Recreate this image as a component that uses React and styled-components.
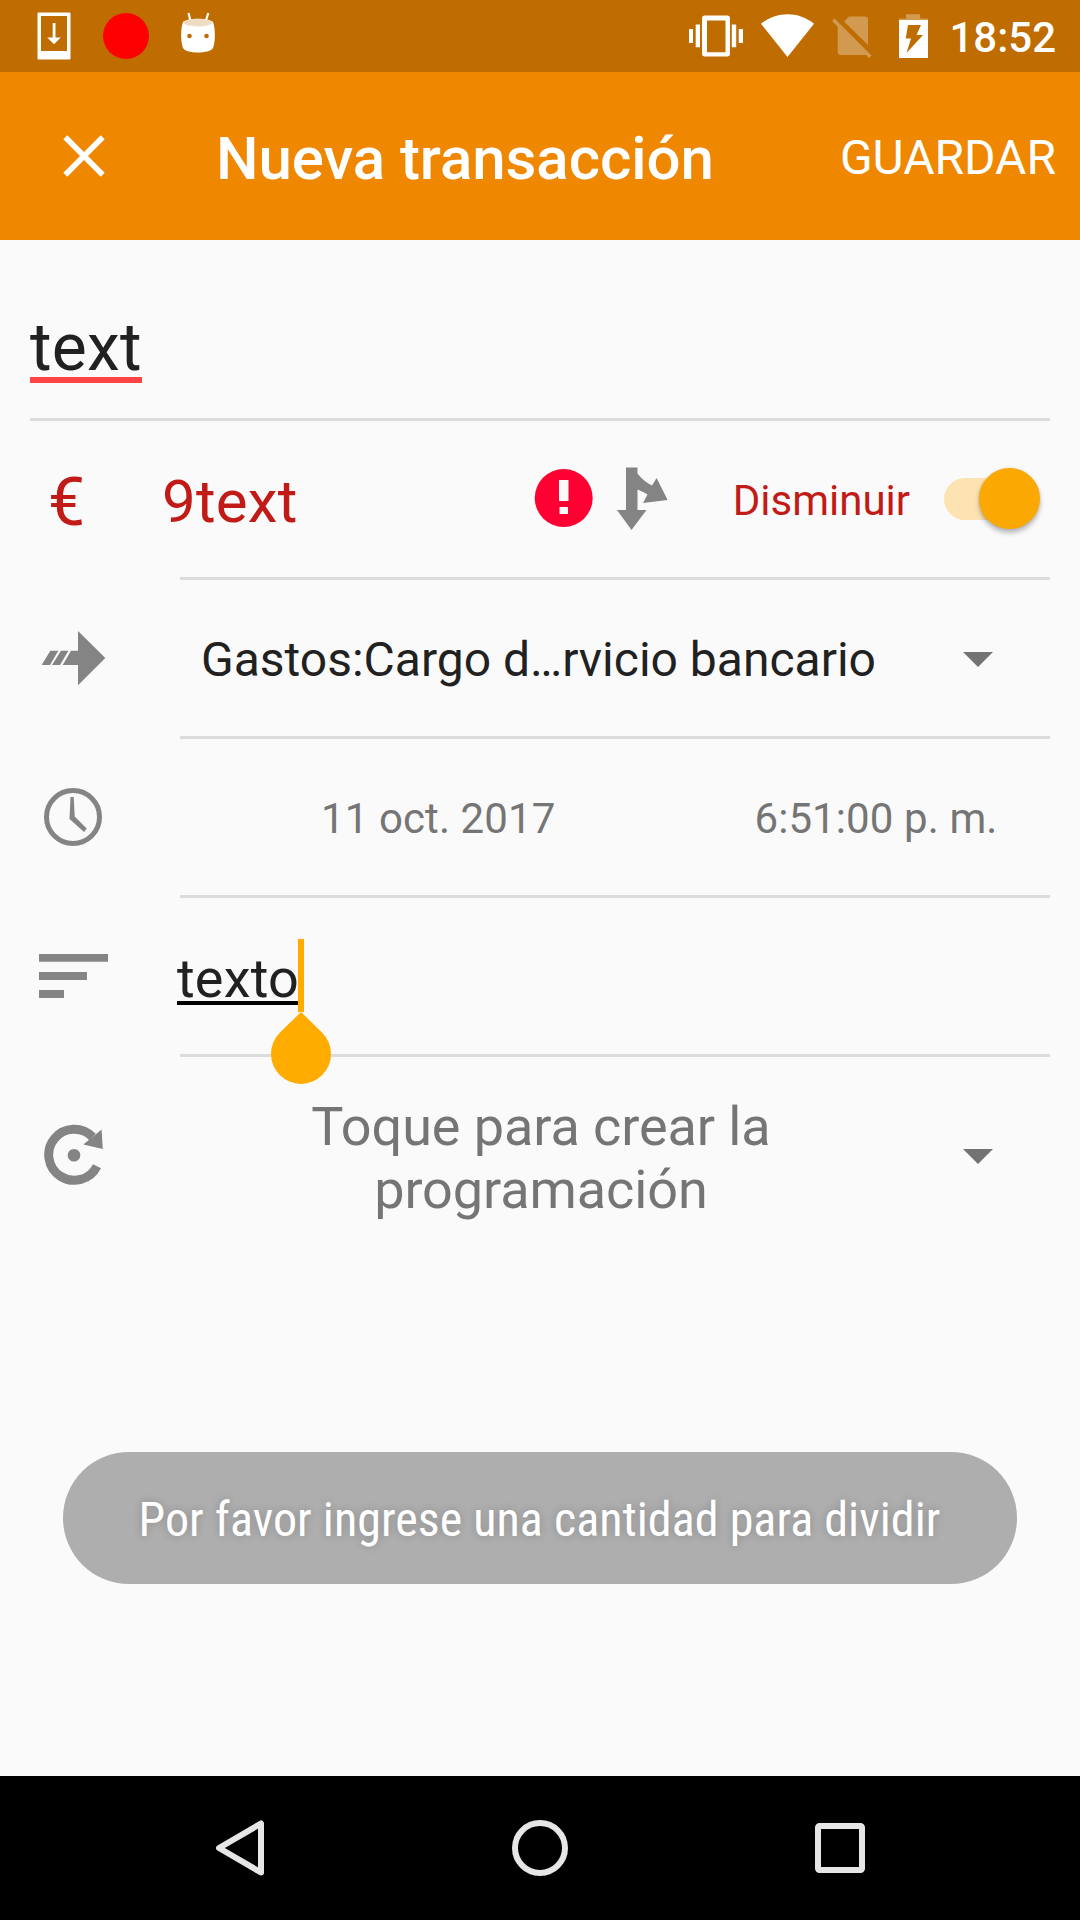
import React from "react";
import styled, { createGlobalStyle } from "styled-components";

const Global = createGlobalStyle`
  * { box-sizing: border-box; }
  body { margin: 0; background: #fafafa; }
  svg { display: block; flex: none; }
`;

const Screen = styled.div`
  width: 1080px;
  height: 1920px;
  display: flex;
  flex-direction: column;
  background: #fafafa;
  font-family: Roboto, "Noto Sans", sans-serif;
  color: #212121;
  overflow: hidden;
`;

const StatusBar = styled.header`
  height: 72px;
  background: #bf6c00;
  display: flex;
  align-items: center;
  justify-content: space-between;
  padding: 0 24px 0 36px;
`;

const StatusGroup = styled.div`
  display: flex;
  align-items: center;
  gap: ${(p) => p.$gap}px;
`;

const Clock = styled.time`
  margin-left: 2px;
  padding-top: 3px;
  font-size: 42px;
  line-height: 50px;
  font-weight: 500;
  color: #fff;
`;

const AppBar = styled.div`
  height: 168px;
  background: #ef8700;
  color: #fff;
  display: flex;
  align-items: center;
  padding: 0 24px 0 60px;
`;

const Title = styled.h1`
  flex: 1;
  margin: 0 0 0 108px;
  padding-top: 5px;
  font-size: 60px;
  line-height: 70px;
  font-weight: 500;
  letter-spacing: -0.06px;
  white-space: nowrap;
`;

const IconButton = styled.button`
  border: 0;
  padding: 0;
  margin-left: ${(p) => p.$left || 0}px;
  background: none;
  display: flex;
`;

const SaveButton = styled.button`
  border: 0;
  padding: 3px 0 0;
  background: none;
  color: #fff;
  font: 400 48px/56px Roboto, "Noto Sans", sans-serif;
`;

const Form = styled.main`
  flex: 1;
  padding: 0 30px;
  display: flex;
  flex-direction: column;
`;

const NameField = styled.div`
  height: 181px;
  border-bottom: 3px solid #dcdcdc;
  padding-top: 70px;
  display: flex;
  align-items: flex-start;
`;

const Misspelled = styled.span`
  width: 112px;
  height: 73px;
  border-bottom: 6px solid #ff4444;
  font-size: 66px;
  line-height: 76px;
  letter-spacing: 0.25px;
`;

const Row = styled.section`
  display: grid;
  grid-template-columns: 150px 1fr;
  height: ${(p) => p.$height || 159}px;
`;

const Lead = styled.div`
  display: flex;
  align-items: center;
  padding: 0 0 3px ${(p) => p.$inset || 0}px;
`;

const Cell = styled.div`
  display: flex;
  align-items: center;
  border-bottom: 3px solid ${(p) => (p.$plain ? "transparent" : "#dcdcdc")};
`;

const Label = styled.span`
  font-size: ${(p) => p.$size}px;
  line-height: 1.17;
  color: ${(p) => p.$color || "#212121"};
  padding-top: ${(p) => p.$drop || 3}px;
  margin-left: ${(p) => p.$left || 0}px;
  letter-spacing: ${(p) => p.$tracking || 0}px;
  white-space: nowrap;
`;

const Amount = styled(Label)`
  flex: 1;
`;

const Alert = styled.svg`
  margin-bottom: 2px;
`;

const Track = styled.span`
  flex: none;
  width: 86px;
  height: 42px;
  margin: 0 20px 1px 34px;
  border-radius: 21px;
  background: #fde3b1;
  display: flex;
  align-items: center;
  justify-content: flex-start;
  padding-left: 35px;
`;

const Thumb = styled.span`
  flex: none;
  width: 61px;
  height: 61px;
  border-radius: 50%;
  background: #fba902;
  box-shadow: 0 4px 5px rgba(0, 0, 0, 0.26), 0 0 3px rgba(0, 0, 0, 0.12);
`;

const Caret = styled.span`
  flex: none;
  width: 30px;
  height: 15px;
  margin: 3px 57px 0 auto;
  background: #737373;
  clip-path: polygon(0 0, 100% 0, 50% 100%);
`;

const Composing = styled.span`
  position: relative;
  width: 122px;
  height: 59px;
  margin: 0 0 1px -3px;
  border-bottom: 4px solid #000;
  font-size: 54px;
  line-height: 65px;
  letter-spacing: 0.2px;
`;

const Cursor = styled.i`
  position: absolute;
  left: 121px;
  top: -7px;
  width: 6px;
  height: 73px;
  background: #ffab00;
`;

const Handle = styled.svg`
  position: absolute;
  left: 94px;
  top: 66px;
`;

const Schedule = styled.p`
  margin: 0 0 0 103px;
  padding-top: 6px;
  width: 516px;
  text-align: center;
  font-size: 54px;
  line-height: 63px;
  letter-spacing: -0.08px;
  color: #757575;
`;

const Toast = styled.div`
  align-self: center;
  width: 954px;
  height: 132px;
  margin: 196px 1px 0 0;
  border-radius: 66px;
  background: #aeaeae;
  display: flex;
  align-items: center;
  justify-content: center;
  padding-top: 4px;
  color: #fff;
  font-family: "Roboto Condensed", Roboto, sans-serif;
  font-stretch: 75%;
  font-size: 48px;
  line-height: 56px;
  letter-spacing: 0.05px;
  white-space: nowrap;
  text-shadow: 0 0 8px rgba(0, 0, 0, 0.2);
`;

const NavBar = styled.nav`
  height: 144px;
  background: #000;
  display: flex;
  align-items: center;
  justify-content: center;
  gap: 240px;
`;

const grey = "#848484";

function PhoneDownload() {
  return (
    <svg width="36" height="48" viewBox="36 12 36 48" fill="#fff">
      <path fillRule="evenodd" d="M38.5 12.5h31q1 0 1 1v45q0 1-1 1h-31q-1 0-1-1v-45q0-1 1-1zM41 16v35h26V16z" />
      <path d="M52.7 23h2.8v14.5h5.3L54 44.3l-6.8-6.8h5.5z" />
    </svg>
  );
}

function RobotHead() {
  return (
    <svg width="36" height="48" viewBox="180 12 36 48">
      <path d="M188.5 13l2 8M208.3 13l-2.5 8" stroke="#fff" strokeWidth="2.2" fill="none" />
      <path d="M183 22c4-4.500 26-4.500 30 0 2.500 7 2.500 19 0 26-3 6-27 6-30 0-2.500-7-2.500-19 0-26z" fill="#fff" />
      <ellipse cx="198" cy="22.700" rx="14" ry="3.700" fill="#efdcc2" />
      <circle cx="189.500" cy="36" r="2.300" fill="#bf6c00" />
      <circle cx="206.500" cy="36" r="2.300" fill="#bf6c00" />
    </svg>
  );
}

function Vibrate() {
  return (
    <svg width="54" height="48" viewBox="689 12 54 48" fill="#fff">
      <path d="M689 29h4v14h-4zM695.700 24.600h4.300v22.600h-4.300zM731.800 24.600h4.400v22.600h-4.400zM738.700 29h4.300v14h-4.300z" />
      <path fillRule="evenodd" d="M705 15.500h22q3 0 3 3v35q0 3-3 3h-22q-3 0-3-3v-35q0-3 3-3zM707 20.500v31.700h18.500V20.500z" />
    </svg>
  );
}

function Wifi() {
  return (
    <svg width="53" height="48" viewBox="761 12 53 48" fill="#fff">
      <path d="M761 23.800C776 11 799 11 814 23.800L787.500 57z" />
    </svg>
  );
}

function NoSim() {
  return (
    <svg width="49" height="48" viewBox="832 12 49 48" fill="#d29950">
      <path d="M849 16.500h16q3 0 3 3V45L844 21.500z" />
      <path d="M837.700 24L868 54q-1 1-3 1h-24.300q-3 0-3-3V25z" />
      <path d="M834.500 18.500l37 37-2.500 2.400-37-37z" />
    </svg>
  );
}

function Battery() {
  return (
    <svg width="30" height="48" viewBox="899 12 30 48">
      <path d="M906 14.300h14.200v4.200h7.800V21h-29v-2.500h7z" fill="#d29950" />
      <path fillRule="evenodd" fill="#fff" d="M899 20h29v38h-29zM908 25l-2.300 13.500h5.300l-4.500 14.500 16.500-18h-6.500l4.500-10z" />
    </svg>
  );
}

function SplitIcon() {
  return (
    <svg width="52" height="64" viewBox="616 467 52 64" fill={grey}>
      <path d="M626 467.500h11.500v6c4 5.500 9 9 14.500 12l4.600-7.500 11 22-24.600 3 4.500-8.500q-5-3-10-5V510h9L631.500 530 617 510h9z" />
    </svg>
  );
}

function TransferIcon() {
  return (
    <svg width="64" height="56" viewBox="42 630 64 56" fill={grey}>
      <path d="M50.300 650.700h8L50 665h-8.300zM61 650.700h7.500L60 665h-8zM71 650.700h7V631l27.300 27L78 685.300V665H62.700z" />
    </svg>
  );
}

function ClockIcon() {
  return (
    <svg width="60" height="60" viewBox="43.500 787 60 60">
      <circle cx="73.500" cy="817" r="26.500" fill="none" stroke={grey} strokeWidth="5" />
      <path d="M71 797h3.200l1 19.500 12 12-2.600 3.500L70 819z" fill={grey} />
    </svg>
  );
}

function NotesIcon() {
  return (
    <svg width="70" height="48" viewBox="39 952 70 48" fill={grey}>
      <path d="M39 954h69v7.700H39zM39 972h48v8H39zM39 990h25v8H39z" />
    </svg>
  );
}

function RepeatIcon() {
  return (
    <svg width="62" height="62" viewBox="43 1124 62 62">
      <path d="M97 1166.200A25.500 25.500 0 1 1 92.500 1137" fill="none" stroke={grey} strokeWidth="9" />
      <path d="M101.600 1129.500l1.200 19.500-19.500-4.500z" fill={grey} />
      <circle cx="74" cy="1155.200" r="6.300" fill={grey} />
    </svg>
  );
}

export default function App() {
  return (
    <Screen>
      <Global />
      <StatusBar>
        <StatusGroup $gap={31}>
          <PhoneDownload />
          <svg width="46" height="46" viewBox="0 0 46 46">
            <circle cx="23" cy="23" r="23" fill="#f00" />
          </svg>
          <RobotHead />
        </StatusGroup>
        <StatusGroup $gap={18}>
          <Vibrate />
          <Wifi />
          <NoSim />
          <Battery />
          <Clock>18:52</Clock>
        </StatusGroup>
      </StatusBar>

      <AppBar>
        <IconButton aria-label="Cerrar">
          <svg width="48" height="48" viewBox="60 132 48 48">
            <path d="M65.300 137.300l37.400 37.400M102.700 137.300l-37.400 37.400" stroke="#fff" strokeWidth="5.600" />
          </svg>
        </IconButton>
        <Title>Nueva transacción</Title>
        <SaveButton>GUARDAR</SaveButton>
      </AppBar>

      <Form>
        <NameField>
          <Misspelled>text</Misspelled>
        </NameField>

        <Row>
          <Lead $inset={18}>
            <Label $size={66} $color="#c11b17" $drop={8}>€</Label>
          </Lead>
          <Cell>
            <Amount $size={60} $color="#c11b17" $drop={7} $left={-18} $tracking={0.2}>9text</Amount>
            <Alert width="60" height="60" viewBox="534 468 60 60">
              <circle cx="563.700" cy="498" r="29" fill="#ff0033" />
              <path d="M559 480h9.500v21H559zM559.500 507h8.500v7h-8.500z" fill="#fafafa" />
            </Alert>
            <IconButton aria-label="Dividir" $left={22}>
              <SplitIcon />
            </IconButton>
            <Label $size={42} $color="#c11b17" $left={65}>Disminuir</Label>
            <Track>
              <Thumb />
            </Track>
          </Cell>
        </Row>

        <Row>
          <Lead $inset={12}>
            <TransferIcon />
          </Lead>
          <Cell>
            <Label $size={48} $left={21} $drop={5}>Gastos:Cargo d…rvicio bancario</Label>
            <Caret />
          </Cell>
        </Row>

        <Row>
          <Lead $inset={13}>
            <ClockIcon />
          </Lead>
          <Cell>
            <Label $size={42} $color="#757575" $left={141} $tracking={0.1}>11 oct. 2017</Label>
            <Label $size={42} $color="#757575" $left={199} $tracking={0.1}>6:51:00 p. m.</Label>
          </Cell>
        </Row>

        <Row>
          <Lead $inset={9}>
            <NotesIcon />
          </Lead>
          <Cell>
            <Composing>
              texto
              <Cursor />
              <Handle width="60" height="72" viewBox="0 0 60 72">
                <path d="M30 0L51 20.500A30 30 0 1 1 9 20.500z" fill="#ffab00" />
              </Handle>
            </Composing>
          </Cell>
        </Row>

        <Row $height={199}>
          <Lead $inset={13}>
            <RepeatIcon />
          </Lead>
          <Cell $plain>
            <Schedule>Toque para crear la programación</Schedule>
            <Caret />
          </Cell>
        </Row>

        <Toast>Por favor ingrese una cantidad para dividir</Toast>
      </Form>

      <NavBar>
        <svg width="60" height="60" viewBox="210 1818 60 60">
          <path d="M261 1823.500v49L219 1848z" fill="none" stroke="#e6e6e6" strokeWidth="6" strokeLinejoin="round" />
        </svg>
        <svg width="60" height="60" viewBox="510 1818 60 60">
          <circle cx="540" cy="1848" r="25" fill="none" stroke="#e6e6e6" strokeWidth="6" />
        </svg>
        <svg width="60" height="60" viewBox="810 1818 60 60">
          <rect x="818" y="1826" width="44" height="44" rx="1.500" fill="none" stroke="#e6e6e6" strokeWidth="6" />
        </svg>
      </NavBar>
    </Screen>
  );
}
